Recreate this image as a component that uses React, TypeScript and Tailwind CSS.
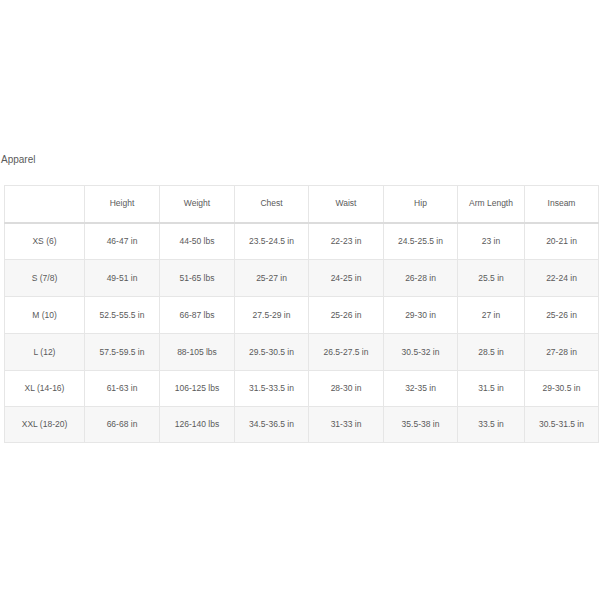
import React from "react";

const headers = ["", "Height", "Weight", "Chest", "Waist", "Hip", "Arm Length", "Inseam"];
const rows = [
  ["XS (6)", "46-47 in", "44-50 lbs", "23.5-24.5 in", "22-23 in", "24.5-25.5 in", "23 in", "20-21 in"],
  ["S (7/8)", "49-51 in", "51-65 lbs", "25-27 in", "24-25 in", "26-28 in", "25.5 in", "22-24 in"],
  ["M (10)", "52.5-55.5 in", "66-87 lbs", "27.5-29 in", "25-26 in", "29-30 in", "27 in", "25-26 in"],
  ["L (12)", "57.5-59.5 in", "88-105 lbs", "29.5-30.5 in", "26.5-27.5 in", "30.5-32 in", "28.5 in", "27-28 in"],
  ["XL (14-16)", "61-63 in", "106-125 lbs", "31.5-33.5 in", "28-30 in", "32-35 in", "31.5 in", "29-30.5 in"],
  ["XXL (18-20)", "66-68 in", "126-140 lbs", "34.5-36.5 in", "31-33 in", "35.5-38 in", "33.5 in", "30.5-31.5 in"],
];
const widths = [80, 75, 75, 74, 75, 74, 67, 74];

export default function App() {
  return (
    <div
      className="w-[600px] h-[600px] bg-white pt-[153px] pl-[4px] text-[#5a5a5a]"
      style={{ fontFamily: '"Liberation Sans", Arial, sans-serif' }}
    >
      <div className="text-[10px] leading-[14px] -ml-[3px] text-[#5a5a5a]">Apparel</div>
      <table className="mt-[18px] border-collapse table-fixed w-[594px] text-[8.5px] text-[#5a5a5a]">
        <colgroup>
          {widths.map((w, i) => (
            <col key={i} style={{ width: w }} />
          ))}
        </colgroup>
        <thead>
          <tr className="h-[37px]">
            {headers.map((h, i) => (
              <th
                key={i}
                className="font-normal text-center border border-[#e6e6e6] border-b-2 border-b-[#dcdcdc] p-0"
              >
                {h}
              </th>
            ))}
          </tr>
        </thead>
        <tbody>
          {rows.map((r, ri) => (
            <tr
              key={ri}
              className={`${ri >= 4 ? "h-[36px]" : "h-[37px]"} ${ri % 2 === 1 ? "bg-[#f7f7f7]" : "bg-white"}`}
            >
              {r.map((c, ci) => (
                <td key={ci} className="text-center border border-[#e6e6e6] p-0">
                  {c}
                </td>
              ))}
            </tr>
          ))}
        </tbody>
      </table>
    </div>
  );
}
